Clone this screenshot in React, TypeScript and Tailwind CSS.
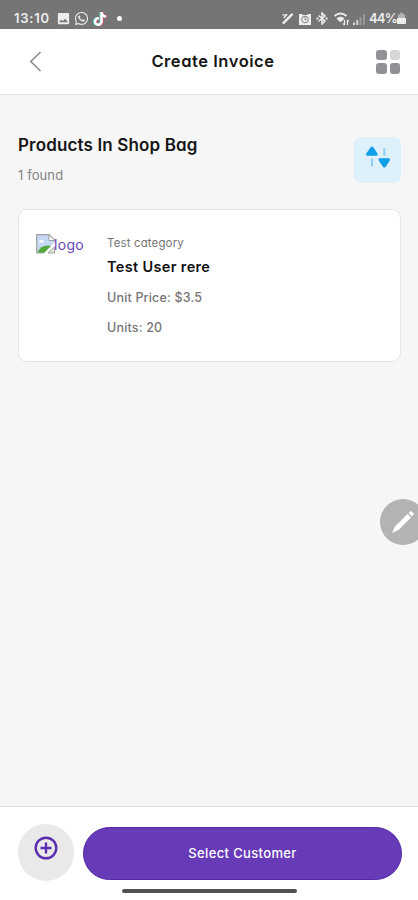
import { FaWhatsapp, FaTiktok } from "react-icons/fa";
import { MdImage } from "react-icons/md";

interface Product {
  id: number;
  category: string;
  name: string;
  price: string;
  units: number;
}

const products: Product[] = [
  {
    id: 1,
    category: "Test category",
    name: "Test User rere",
    price: "$3.5",
    units: 20,
  },
];

function StatusBar() {
  return (
    <div className="flex h-[29px] shrink-0 items-center justify-between bg-[#757575] pt-[8px] pr-3 pl-[14px] text-[#ededed]">
      <div className="flex items-center">
        <span className="w-[42px] text-[13px] leading-none font-semibold tracking-[0.8px]">
          13:10
        </span>
        <MdImage className="size-[15px]" />
        <FaWhatsapp className="ml-[3px] size-[15px]" />
        <span className="relative ml-1 size-[14px]">
          <FaTiktok className="absolute top-0 left-px size-[14px] text-[#d9536f]" />
          <FaTiktok className="absolute top-0 -left-px size-[14px] text-[#5cc9c4]" />
          <FaTiktok className="absolute top-0 left-0 size-[14px] text-white" />
        </span>
        <span className="ml-[10px] size-[5px] rounded-full bg-white" />
      </div>
      <div className="flex items-center">
        <svg viewBox="0 0 14 14" className="size-[13px]" fill="none" stroke="currentColor">
          <path d="M2 12.5 L12.5 2" strokeWidth="2.6" />
          <path d="M1.5 3 H6 L3 6.5" strokeWidth="1.4" />
        </svg>
        <svg viewBox="0 0 12 12" className="ml-[5px] size-3">
          <path d="M0 1 H3 L4 2 H8 L9 1 H12 V12 H0Z" fill="#ededed" />
          <circle cx="6" cy="6.5" r="3.3" fill="none" stroke="#808080" />
          <path d="M6 4.5 V6.8 H7.6" fill="none" stroke="#808080" />
        </svg>
        <svg
          viewBox="0 0 12 13"
          className="ml-[5px] h-[13px] w-3"
          fill="none"
          stroke="currentColor"
          strokeWidth="1.5"
        >
          <path d="M2.5 3.5 L9 9 L6 12 V1 L9 4 L2.5 9.5" />
          <path d="M0.5 6.5 H2.4 M9.6 6.5 H11.5" strokeWidth="2" />
        </svg>
        <svg viewBox="0 0 16 14" className="ml-[5px] h-[14px] w-[17px]" fill="none" stroke="currentColor">
          <path d="M1 4 Q7 -1 13 4" strokeWidth="2" />
          <path d="M3.5 6.5 Q7 3.5 10.5 6.5 L7 10 Z" fill="currentColor" />
          <path d="M11 8 V13 M9.5 11.5 L11 13 M14 13 V8 M15.3 9.5 L14 8" strokeWidth="1.3" />
        </svg>
        <svg viewBox="0 0 12 12" className="ml-[3px] size-3">
          <path d="M0 12 V9.5 H2 V12Z M3.3 12 V7 H5.3 V12Z" fill="#d5d5d5" />
          <path d="M6.6 12 V4 H8.6 V12Z M10 12 V1 H12 V12Z" fill="#999" />
        </svg>
        <span className="ml-[4px] w-[28px] text-[13px] leading-none font-semibold tracking-[-0.8px]">
          44%
        </span>
        <svg viewBox="0 0 10 13" className="h-[13px] w-[9px]">
          <path d="M3.5 0 H6.5 V2 H9 V7 H1 V2 H3.5Z" fill="#b5b5b5" />
          <rect x="0" y="6" width="10" height="6.5" rx="1" fill="#ededed" />
        </svg>
      </div>
    </div>
  );
}

function Header() {
  return (
    <header className="flex h-[66px] shrink-0 items-center justify-between border-b border-[#e3e3e3] bg-white pr-[18px] pl-[29px]">
      <svg
        viewBox="0 0 13 21"
        className="h-[21px] w-[13px]"
        fill="none"
        stroke="#8c8c8c"
        strokeWidth="1.6"
      >
        <path d="M11.5 1 L1.8 10.5 L11.5 20" />
      </svg>
      <h1 className="ml-[8px] text-[16.5px] font-semibold tracking-[0.55px] text-[#161616]">
        Create Invoice
      </h1>
      <div className="grid grid-cols-2 gap-[3px]">
        <span className="size-[10.5px] rounded-[3px] bg-[#929296]" />
        <span className="size-[10.5px] rounded-[3px] bg-[#d6d6d8]" />
        <span className="size-[10.5px] rounded-[3px] bg-[#929296]" />
        <span className="size-[10.5px] rounded-[3px] bg-[#929296]" />
      </div>
    </header>
  );
}

function SortButton() {
  return (
    <button className="flex h-[46px] w-[47px] justify-center rounded-[7px] bg-[#def1fa] pt-[9px]">
      <svg viewBox="0 0 26 24" className="h-6 w-[26px]">
        <path
          d="M6.3 1.6 Q7 .8 7.7 1.6 L11.9 8 Q12.3 9 11.2 9 H2.4 Q1.3 9 1.8 8Z"
          fill="#129fe8"
          stroke="#129fe8"
          strokeWidth="1.4"
          strokeLinejoin="round"
        />
        <path
          d="M18.6 20.5 Q19.3 21.3 20 20.5 L24.2 14 Q24.7 13 23.5 13 H15 Q13.9 13 14.3 14Z"
          fill="#129fe8"
          stroke="#129fe8"
          strokeWidth="1.4"
          strokeLinejoin="round"
        />
        <path
          d="M7 13.5 V19.5 M19.3 3 V9"
          stroke="#8bcff0"
          strokeWidth="2"
          strokeLinecap="round"
        />
      </svg>
    </button>
  );
}

function BrokenImage({ alt }: { alt: string }) {
  return (
    <div className="flex h-5 w-[54px] items-start">
      <svg viewBox="0 0 20 20" className="size-5 shrink-0">
        <path d="M0.7 0.7 H13 L19 6.5 V8 L7.5 19 H0.7Z" fill="#c6d8f3" />
        <path d="M3 7.5 Q4 5.5 6 6 Q8 6 8 8.5 H3Z" fill="#fff" />
        <path d="M1 18.5 Q5 11 13 11.5 L15 12 L8 19Z" fill="#50a83c" />
        <path
          d="M7.5 19 H0.7 V0.7 H13 L19 6.5 V8"
          fill="none"
          stroke="#a0a0a0"
          strokeWidth="1.2"
        />
        <path d="M13 0.7 V6.5 H19Z" fill="#fff" stroke="#a0a0a0" />
        <path d="M12 19 H18.5 V13Z" fill="#dce8d8" stroke="#a0a0a0" />
      </svg>
      <span className="-ml-[2px] text-[14px] leading-[22px] tracking-[0.3px] text-[#6848b5]">
        {alt}
      </span>
    </div>
  );
}

function ProductCard({ product }: { product: Product }) {
  return (
    <div className="flex h-[153px] rounded-[9px] border border-[#e4e4e4] bg-white pt-6 pl-[17px]">
      <BrokenImage alt="logo" />
      <div className="ml-[17px] pt-px text-[#767676]">
        <p className="text-[11.5px] leading-4 tracking-[0.13px]">
          {product.category}
        </p>
        <h3 className="mt-[6px] text-[14.5px] leading-5 font-semibold tracking-[0.35px] text-[#111]">
          {product.name}
        </h3>
        <p className="mt-[13px] text-[12.5px] leading-4 font-medium tracking-[0.18px]">
          Unit Price: {product.price}
        </p>
        <p className="mt-[14px] text-[12.5px] leading-4 font-medium tracking-[0.18px]">
          Units: {product.units}
        </p>
      </div>
    </div>
  );
}

function Footer() {
  return (
    <footer className="flex h-[94px] shrink-0 flex-col items-center border-t border-[#dedede] bg-white pt-[17px]">
      <div className="flex w-full items-center gap-[9px] pr-4 pl-[18px]">
        <button className="flex h-[57px] w-14 shrink-0 justify-center rounded-full bg-[#e9e9e9] pt-[12px]">
          <svg
            viewBox="0 0 24 24"
            className="size-6"
            fill="none"
            stroke="#5a2fb0"
            strokeWidth="2.4"
          >
            <circle cx="12" cy="12" r="10.3" />
            <path d="M12 6.5 V17.5 M6.5 12 H17.5" />
          </svg>
        </button>
        <button className="mt-px h-[53px] flex-1 rounded-full border border-[#5527a5] bg-[#673ab7] pt-px text-[13px] font-medium tracking-[0.35px] text-white">
          Select Customer
        </button>
      </div>
      <div className="mt-[8px] h-1 w-[175px] rounded-full bg-[#505250]" />
    </footer>
  );
}

export default function App() {
  return (
    <div className="relative flex h-[900px] w-full flex-col overflow-hidden bg-[#f6f6f6] font-[Inter,sans-serif] [font-feature-settings:'cv11']">
      <StatusBar />
      <Header />
      <main className="flex-1 pt-[38px] pr-[17px] pl-[18px]">
        <div className="mb-[25px] flex items-start justify-between pt-[4px]">
          <div className="-mt-[4px]">
            <h2 className="text-[17px] leading-6 font-semibold tracking-[0.15px] text-[#161616]">
              Products In Shop Bag
            </h2>
            <p className="mt-[9px] text-[13px] leading-[18px] tracking-[0.1px] text-[#858585]">
              {products.length} found
            </p>
          </div>
          <SortButton />
        </div>
        {products.map((product) => (
          <ProductCard key={product.id} product={product} />
        ))}
      </main>
      <button className="absolute top-[499px] left-[380px] flex size-[46px] items-center justify-center rounded-full bg-[#b3b3b3]">
        <svg viewBox="0 0 24 24" className="size-6" fill="#fff">
          <path d="M1 23 L4 16.5 L16.5 4 L20 7.5 L7.5 20Z" />
          <path d="M17.5 3 L19 1.5 Q20 .8 21 1.8 L22.3 3 Q23.3 4 22.3 5 L21 6.5Z" />
        </svg>
      </button>
      <Footer />
    </div>
  );
}
